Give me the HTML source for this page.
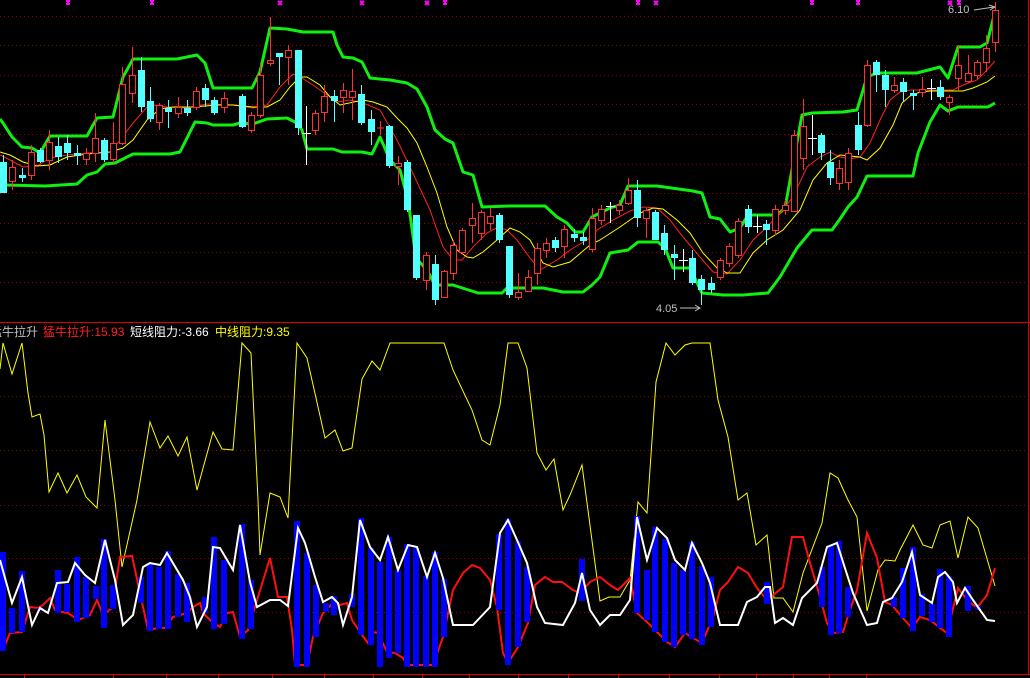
<!DOCTYPE html>
<html><head><meta charset="utf-8"><style>
html,body{margin:0;padding:0;background:#000;width:1030px;height:678px;overflow:hidden}
svg{display:block}
text{font-family:"Liberation Sans","Noto Sans CJK SC",sans-serif}
</style></head><body>
<svg width="1030" height="678" viewBox="0 0 1030 678" xmlns="http://www.w3.org/2000/svg">
<rect width="1030" height="678" fill="#000"/>
<g stroke="#900" stroke-width="1" stroke-dasharray="1 3" shape-rendering="crispEdges">
<line x1="0" y1="16.5" x2="1028" y2="16.5"/><line x1="0" y1="45.5" x2="1028" y2="45.5"/><line x1="0" y1="75.5" x2="1028" y2="75.5"/><line x1="0" y1="104.5" x2="1028" y2="104.5"/><line x1="0" y1="134.5" x2="1028" y2="134.5"/><line x1="0" y1="164.5" x2="1028" y2="164.5"/><line x1="0" y1="193.5" x2="1028" y2="193.5"/><line x1="0" y1="223.5" x2="1028" y2="223.5"/><line x1="0" y1="252.5" x2="1028" y2="252.5"/><line x1="0" y1="282.5" x2="1028" y2="282.5"/>
<line x1="0" y1="396.5" x2="1028" y2="396.5"/><line x1="0" y1="450.5" x2="1028" y2="450.5"/><line x1="0" y1="505.5" x2="1028" y2="505.5"/><line x1="0" y1="558.5" x2="1028" y2="558.5"/><line x1="0" y1="612.5" x2="1028" y2="612.5"/>
</g>
<g stroke="#e00000" stroke-width="1" shape-rendering="crispEdges">
<line x1="0" y1="322.5" x2="1030" y2="322.5"/>
<line x1="1028.5" y1="0" x2="1028.5" y2="675"/>
<line x1="0" y1="674.5" x2="1030" y2="674.5"/>
<path d="M24.5 674V678M113.5 674V678M166.5 674V678M218.5 674V678M272.5 674V678M324.5 674V678M373.5 674V678M422.5 674V678M469.5 674V678M518.5 674V678M568.5 674V678M618.5 674V678M669.5 674V678M719.5 674V678M756.5 674V678M793.5 674V678M829.5 674V678M866.5 674V678"/>
</g>
<!-- magenta markers -->
<g stroke="#ff00ff" stroke-width="2">
<path d="M66 1H70M68 1V4M66 4H70 M150 1H154M152 1V4M150 4H154 M278 1L282 5M282 1L278 5 M360 1L364 5M364 1L360 5 M425 1L429 5M429 1L425 5 M443 1H447M445 1V4M443 4H447 M636 1H640M638 1V4M636 4H640 M654 1L658 5M658 1L654 5 M810 1H814M812 1V4M810 4H814 M856 1H860M858 1V4M856 4H860 M948 1L952 5M952 1L948 5 M957 1H961M959 1V4M957 4H961"/>
</g>
<!-- green bands -->
<g fill="none" stroke="#10f010" stroke-width="3" stroke-linejoin="round">
<polyline points="0,119 3,123 12,137 22,147 32,148 40,153 50,136 87,136 97,118 113,117 123,77 133,59 177,59 197,55 205,63 213,88 252,88 260,72 270,28 287,29 303,32 333,32 337,45 343,57 353,58 362,62 370,78 390,80 407,83 417,89 427,107 435,130 445,139 453,143 463,172 473,175 482,207 510,206 545,206 557,217 567,223 575,232 583,232 592,217 610,208 620,205 628,186 657,186 693,191 702,193 710,217 720,219 730,232 740,228 748,215 777,215 785,208 802,115 812,113 843,112 857,110 867,77 877,73 917,73 940,67 948,78 958,47 980,47 987,43 995,12"/>
<polyline points="0,173 5,185 45,186 77,184 87,175 97,172 105,164 115,163 133,154 170,154 180,152 195,122 207,123 213,125 233,125 240,123 253,124 267,119 287,118 297,123 302,130 307,149 333,149 342,152 362,152 372,154 380,137 390,160 400,170 408,200 416,258 427,270 435,285 453,285 478,293 502,293 507,288 543,288 563,292 583,292 592,285 600,277 610,253 628,250 638,242 658,242 665,248 673,268 690,268 702,293 723,295 743,295 768,293 780,277 797,248 812,230 832,230 840,219 848,207 857,197 867,176 913,176 918,153 930,122 940,105 948,111 958,107 988,107 995,103"/>
</g>
<!-- MAs -->
<polyline fill="none" stroke="#ff2020" stroke-width="1" points="0,155 10,160 23,167 37,166 50,158 67,155 87,153 110,152 120,140 133,123 147,107 153,105 167,107 187,108 207,104 233,105 253,108 267,105 280,87 293,74 300,77 313,85 327,95 333,98 337,102 350,100 363,103 380,110 397,140 410,167 417,182 430,210 443,247 453,260 462,260 473,247 487,233 498,227 507,230 517,240 530,258 540,270 557,260 570,250 590,238 597,230 613,220 630,211 643,207 657,208 670,220 683,237 700,257 713,272 727,274 740,260 753,240 767,227 780,213 793,197 807,167 820,157 830,152 840,157 850,159 860,157 870,143 880,120 890,100 900,92 910,90 953,90 963,85 977,80 987,70 995,61"/>
<polyline fill="none" stroke="#ffff00" stroke-width="1" points="0,152 10,155 23,162 37,166 50,165 67,157 87,154 110,152 123,148 133,140 147,120 160,109 173,107 193,107 217,105 233,105 253,107 267,107 280,100 290,87 300,77 307,77 320,85 330,97 340,105 363,100 373,102 387,107 397,118 407,128 417,143 427,167 437,193 447,227 457,250 467,257 473,258 483,252 497,240 510,228 520,232 530,240 543,263 553,267 570,262 590,245 600,240 620,227 640,213 653,208 663,209 677,220 690,233 703,253 717,268 727,273 740,273 753,253 767,240 783,230 800,210 813,180 827,163 840,155 860,157 867,160 880,148 893,125 902,103 910,96 920,92 930,91 963,91 973,88 987,82 995,76"/>
<!-- candles: red hollow -->
<g stroke="#ff3030" stroke-width="1" fill="#000" shape-rendering="crispEdges">
<path d="M12.5 160V190M31.5 145V180M49.5 130V170M86.5 148V165M95.5 113V162M113.5 122V163M122.5 67V145M132.5 47V103M159.5 103V130M178.5 97V118M196.5 87V110M224.5 92V113M251.5 112V133M260.5 63V118M270.5 17V66M288.5 45V85M315.5 110V135M324.5 85V122M343.5 83V113M352.5 69V120M398.5 156V185M426.5 252V290M444.5 270V298M453.5 240V280M462.5 228V255M472.5 203V243M481.5 210V240M490.5 208V230M518.5 273V300M528.5 270V292M537.5 243V285M546.5 238V258M564.5 225V258M592.5 208V252M601.5 205V225M619.5 200V215M628.5 178V205M646.5 208V238M720.5 258V280M729.5 243V267M738.5 218V258M775.5 205V235M785.5 200V215M794.5 130V212M803.5 99V170M839.5 160V190M848.5 148V190M867.5 60V127M894.5 77V93M922.5 77V97M949.5 95V115M958.5 45V90M968.5 55V83M977.5 60V80M986.5 35V72M995.5 2V52M380.5 121V135M377 128H384"/>
<rect x="9.5" y="167.5" width="6" height="14"/><rect x="28.5" y="152.5" width="6" height="23"/><rect x="46.5" y="142.5" width="6" height="18"/><rect x="83.5" y="153.5" width="6" height="6"/><rect x="92.5" y="138.5" width="6" height="15"/><rect x="110.5" y="143.5" width="6" height="16"/><rect x="119.5" y="84.5" width="6" height="59"/><rect x="129.5" y="75.5" width="6" height="18"/><rect x="156.5" y="105.5" width="6" height="17"/><rect x="175.5" y="107.5" width="6" height="6"/><rect x="193.5" y="91.5" width="6" height="16"/><rect x="221.5" y="98.5" width="6" height="9"/><rect x="248.5" y="115.5" width="6" height="15"/><rect x="257.5" y="75.5" width="6" height="40"/><rect x="267.5" y="60.5" width="6" height="3"/><rect x="285.5" y="50.5" width="6" height="7"/><rect x="312.5" y="113.5" width="6" height="17"/><rect x="321.5" y="96.5" width="6" height="16"/><rect x="340.5" y="90.5" width="6" height="7"/><rect x="349.5" y="91.5" width="6" height="6"/><rect x="395.5" y="163.5" width="6" height="3"/><rect x="423.5" y="255.5" width="6" height="25"/><rect x="441.5" y="271.5" width="6" height="26"/><rect x="450.5" y="245.5" width="6" height="28"/><rect x="459.5" y="230.5" width="6" height="22"/><rect x="469.5" y="218.5" width="6" height="7"/><rect x="478.5" y="212.5" width="6" height="21"/><rect x="487.5" y="216.5" width="6" height="7"/><rect x="515.5" y="292.5" width="6" height="5"/><rect x="525.5" y="277.5" width="6" height="14"/><rect x="534.5" y="248.5" width="6" height="25"/><rect x="543.5" y="243.5" width="6" height="7"/><rect x="561.5" y="229.5" width="6" height="17"/><rect x="589.5" y="218.5" width="6" height="31"/><rect x="598.5" y="209.5" width="6" height="11"/><rect x="616.5" y="205.5" width="6" height="5"/><rect x="625.5" y="190.5" width="6" height="13"/><rect x="643.5" y="210.5" width="6" height="8"/><rect x="717.5" y="260.5" width="6" height="17"/><rect x="726.5" y="246.5" width="6" height="17"/><rect x="735.5" y="221.5" width="6" height="34"/><rect x="772.5" y="209.5" width="6" height="21"/><rect x="782.5" y="205.5" width="6" height="5"/><rect x="791.5" y="135.5" width="6" height="76"/><rect x="800.5" y="126.5" width="6" height="32"/><rect x="836.5" y="168.5" width="6" height="15"/><rect x="845.5" y="153.5" width="6" height="29"/><rect x="864.5" y="65.5" width="6" height="60"/><rect x="891.5" y="85.5" width="6" height="5"/><rect x="919.5" y="89.5" width="6" height="3"/><rect x="946.5" y="97.5" width="6" height="5"/><rect x="955.5" y="65.5" width="6" height="13"/><rect x="965.5" y="73.5" width="6" height="8"/><rect x="974.5" y="62.5" width="6" height="13"/><rect x="983.5" y="48.5" width="6" height="14"/><rect x="992.5" y="10.5" width="6" height="32"/>
</g>
<!-- cyan candles -->
<g stroke="#54ffff" stroke-width="1" fill="#54ffff" shape-rendering="crispEdges">
<path d="M3.5 155V193M22.5 168V182M40.5 148V163M58.5 137V163M67.5 135V160M77.5 145V165M104.5 138V162M141.5 57V112M150.5 87V122M168.5 100V128M187.5 100V116M205.5 84V107M214.5 97V115M242.5 94V128M279.5 53V85M298.5 50V135M334.5 90V122M361.5 85V125M371.5 110V145M389.5 125V168M407.5 160V212M416.5 215V280M435.5 255V305M499.5 213V243M509.5 246V298M555.5 237V252M574.5 229V242M583.5 232V245M637.5 180V227M655.5 210V240M664.5 225V255M674.5 245V280M692.5 250V285M701.5 275V305M711.5 277V293M748.5 205V233M766.5 220V245M821.5 133V160M830.5 150V185M858.5 112V155M876.5 60V92M885.5 70V107M903.5 78V102M913.5 90V110M940.5 80V100"/>
</g>
<g fill="#54ffff">
<rect x="0" y="162" width="7" height="31"/><rect x="19" y="175" width="7" height="3"/><rect x="37" y="150" width="7" height="12"/><rect x="55" y="146" width="7" height="11"/><rect x="64" y="143" width="7" height="10"/><rect x="74" y="153" width="7" height="3"/><rect x="101" y="140" width="7" height="20"/><rect x="138" y="70" width="7" height="37"/><rect x="147" y="101" width="7" height="18"/><rect x="165" y="108" width="7" height="4"/><rect x="184" y="108" width="7" height="5"/><rect x="202" y="88" width="7" height="12"/><rect x="211" y="100" width="7" height="13"/><rect x="239" y="96" width="7" height="31"/><rect x="276" y="53" width="7" height="4"/><rect x="295" y="50" width="7" height="78"/><rect x="331" y="96" width="7" height="5"/><rect x="358" y="94" width="7" height="29"/><rect x="368" y="119" width="7" height="13"/><rect x="386" y="126" width="7" height="40"/><rect x="404" y="162" width="7" height="48"/><rect x="413" y="215" width="7" height="63"/><rect x="432" y="264" width="7" height="36"/><rect x="496" y="215" width="7" height="25"/><rect x="506" y="246" width="7" height="49"/><rect x="552" y="240" width="7" height="8"/><rect x="571" y="234" width="7" height="4"/><rect x="580" y="237" width="7" height="4"/><rect x="634" y="190" width="7" height="28"/><rect x="652" y="212" width="7" height="28"/><rect x="661" y="233" width="7" height="17"/><rect x="671" y="254" width="7" height="4"/><rect x="689" y="258" width="7" height="25"/><rect x="698" y="279" width="7" height="11"/><rect x="708" y="283" width="7" height="7"/><rect x="745" y="209" width="7" height="18"/><rect x="763" y="224" width="7" height="6"/><rect x="818" y="135" width="7" height="18"/><rect x="827" y="162" width="7" height="16"/><rect x="855" y="125" width="7" height="25"/><rect x="873" y="62" width="7" height="13"/><rect x="882" y="75" width="7" height="15"/><rect x="900" y="82" width="7" height="10"/><rect x="910" y="93" width="7" height="3"/><rect x="937" y="87" width="7" height="10"/>
</g>
<!-- white crosses -->
<g stroke="#fff" stroke-width="1" shape-rendering="crispEdges">
<path d="M306.5 106V165M302 133.5H311M610.5 202V223M606 206.5H615M683.5 249V272M679 260.5H688M757.5 215V233M753 226.5H762M812.5 115V155M808 138.5H817M931.5 79V100M927 88.5H936"/>
</g>
<!-- price labels -->
<text x="948" y="13" font-size="11" fill="#c0c0c0">6.10</text>
<path d="M974 10L994 7M989 5L995 7L990 10" stroke="#c0c0c0" fill="none" stroke-width="1"/>
<text x="656" y="312" font-size="11" fill="#c0c0c0">4.05</text>
<path d="M680 308H700M695 305L700 308L695 311" stroke="#c0c0c0" fill="none" stroke-width="1"/>
<!-- indicator title -->
<text x="-10" y="336" font-size="12" fill="#c0c0c0">猛牛拉升</text>
<text x="43" y="336" font-size="12" fill="#ff2020">猛牛拉升:15.93</text>
<text x="130" y="336" font-size="12" fill="#ffffff">短线阻力:-3.66</text>
<text x="215" y="336" font-size="12" fill="#ffff00">中线阻力:9.35</text>
<!-- lower indicator -->
<polyline fill="none" stroke="#ffff00" stroke-width="1" points="0,369 3,343 12,374 22,343 28,393 32,417 40,414 44,435 49,492 58,473 67,493 77,475 86,497 97,508 105,420 115,500 122,567 137,500 150,422 160,448 168,436 178,456 187,437 197,490 213,432 222,449 233,450 242,343 251,353 258,500 260,555 270,493 280,497 288,518 297,343 307,358 325,438 335,430 343,451 352,448 362,379 372,361 380,370 390,343 444,343 453,370 472,410 482,440 490,445 500,405 508,343 518,343 527,368 537,453 546,470 554,459 563,510 570,495 582,465 600,601 609,597 620,597 630,580 638,502 647,513 656,382 666,343 675,355 685,345 692,343 710,343 718,400 728,437 738,500 747,493 756,545 767,535 774,598 783,598 793,612 803,573 822,523 830,473 838,478 848,500 857,517 867,611 878,570 885,560 895,561 900,550 913,525 923,545 932,548 940,525 950,521 958,558 968,517 978,528 995,586"/>
<polyline fill="none" stroke="#ff1010" stroke-width="2" points="0,642 5,645 10,633 22,632 30,607 38,608 43,605 50,598 55,610 62,612 68,613 78,620 83,618 90,615 97,600 103,615 112,608 120,557 132,556 148,630 158,628 165,628 173,617 180,615 187,613 193,607 200,603 203,613 213,623 220,627 227,613 233,612 240,637 248,630 258,597 270,558 278,597 287,597 292,630 295,665 307,665 313,637 323,613 333,603 340,605 347,603 352,620 362,635 368,643 373,632 378,633 387,652 395,653 403,658 407,665 433,665 443,637 453,590 463,573 472,565 480,568 490,580 497,607 503,653 508,663 518,647 528,623 535,585 545,577 553,582 562,582 573,590 580,593 590,582 600,577 610,585 618,590 630,578 637,613 647,622 657,632 667,642 675,647 685,633 693,638 702,643 713,617 720,590 728,582 738,567 748,573 757,588 767,600 783,587 792,537 803,537 810,563 818,590 827,623 833,633 843,632 850,610 857,590 867,533 877,558 885,602 892,605 902,617 912,628 920,617 930,620 940,628 947,633 958,588 967,600 977,608 987,595 995,568"/>
<g fill="#0000ff">
<rect x="0" y="552" width="6" height="99"/><rect x="9" y="608" width="6" height="25"/><rect x="19" y="571" width="6" height="61"/><rect x="37" y="608" width="6" height="3"/><rect x="55" y="570" width="6" height="43"/><rect x="64" y="584" width="6" height="28"/><rect x="74" y="557" width="6" height="65"/><rect x="83" y="577" width="6" height="41"/><rect x="93" y="586" width="6" height="13"/><rect x="101" y="539" width="6" height="89"/><rect x="110" y="585" width="6" height="24"/><rect x="138" y="577" width="6" height="26"/><rect x="147" y="564" width="6" height="67"/><rect x="156" y="567" width="6" height="62"/><rect x="165" y="551" width="6" height="78"/><rect x="175" y="574" width="6" height="43"/><rect x="184" y="583" width="6" height="39"/><rect x="202" y="597" width="6" height="16"/><rect x="211" y="537" width="6" height="92"/><rect x="221" y="560" width="6" height="64"/><rect x="239" y="524" width="6" height="115"/><rect x="248" y="580" width="6" height="49"/>
<rect x="294" y="521" width="6" height="146"/><rect x="304" y="553" width="6" height="114"/><rect x="313" y="585" width="6" height="52"/><rect x="323" y="603" width="6" height="9"/><rect x="331" y="596" width="6" height="19"/><rect x="349" y="594" width="6" height="13"/><rect x="358" y="518" width="6" height="117"/><rect x="368" y="548" width="6" height="97"/><rect x="377" y="562" width="6" height="105"/><rect x="386" y="537" width="6" height="121"/><rect x="395" y="570" width="6" height="83"/><rect x="404" y="544" width="6" height="123"/><rect x="413" y="548" width="6" height="119"/><rect x="423" y="576" width="6" height="91"/><rect x="432" y="552" width="6" height="115"/><rect x="441" y="579" width="6" height="58"/><rect x="496" y="534" width="6" height="76"/><rect x="505" y="519" width="6" height="146"/><rect x="515" y="541" width="6" height="106"/><rect x="524" y="567" width="6" height="55"/>
<rect x="579" y="559" width="6" height="42"/><rect x="634" y="516" width="6" height="97"/><rect x="644" y="570" width="6" height="50"/><rect x="652" y="527" width="6" height="105"/><rect x="662" y="539" width="6" height="103"/><rect x="671" y="563" width="6" height="84"/><rect x="680" y="570" width="6" height="65"/><rect x="689" y="542" width="6" height="97"/><rect x="699" y="566" width="6" height="79"/><rect x="708" y="577" width="6" height="50"/><rect x="764" y="582" width="6" height="22"/><rect x="819" y="567" width="6" height="40"/><rect x="828" y="545" width="6" height="90"/><rect x="836" y="541" width="6" height="92"/><rect x="845" y="587" width="6" height="30"/><rect x="891" y="597" width="6" height="10"/><rect x="900" y="568" width="6" height="50"/><rect x="910" y="547" width="6" height="84"/><rect x="919" y="594" width="6" height="22"/><rect x="929" y="604" width="6" height="18"/><rect x="937" y="569" width="6" height="59"/><rect x="946" y="576" width="6" height="61"/><rect x="965" y="586" width="6" height="25"/><rect x="975" y="606" width="6" height="4"/>
</g>
<polyline fill="none" stroke="#ffffff" stroke-width="2" points="0,560 12,603 22,577 32,625 40,608 48,613 57,583 68,582 75,563 85,575 95,583 105,540 115,580 123,625 133,615 143,567 150,563 160,565 167,553 183,580 190,597 197,627 207,607 213,547 220,548 233,570 240,525 250,582 257,607 270,600 280,600 288,606 298,528 305,543 315,577 323,602 332,597 338,603 343,625 352,597 360,520 370,547 380,560 388,537 398,570 408,545 417,547 427,577 435,553 443,578 453,625 473,625 490,607 500,533 508,520 517,540 527,563 537,607 545,623 563,625 575,603 582,573 590,610 600,625 610,615 620,615 630,600 637,517 647,560 657,528 667,538 675,560 685,570 692,543 702,563 710,583 720,625 738,625 747,602 757,597 765,587 770,587 775,623 783,618 793,625 802,598 817,583 827,547 837,543 843,562 853,593 867,625 877,623 883,602 892,598 902,582 912,552 920,595 932,603 938,577 945,572 953,582 957,603 965,588 973,600 987,620 995,621"/>
</svg>
</body></html>
